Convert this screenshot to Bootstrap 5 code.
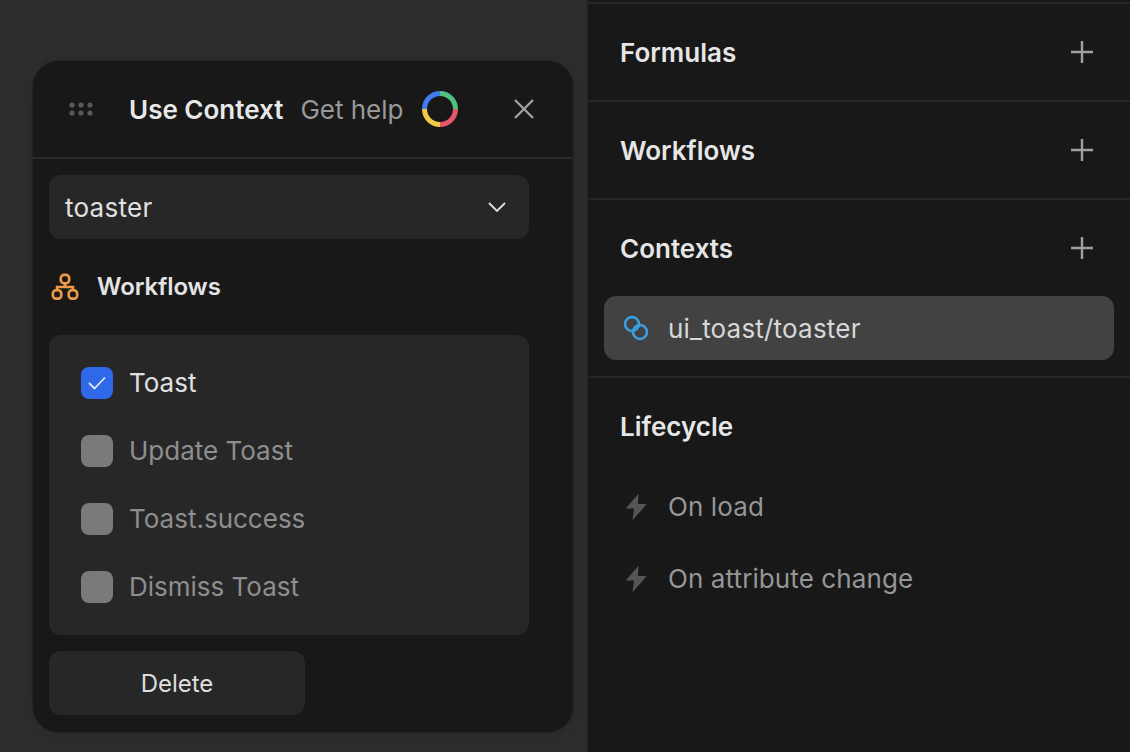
<!DOCTYPE html>
<html lang="en">
<head>
<meta charset="utf-8">
<title>Use Context</title>
<link href="https://cdn.jsdelivr.net/npm/bootstrap@5.3.0/dist/css/bootstrap.min.css" rel="stylesheet">
<style>
html,body{height:100%}
body{background:#2e2e2e;font-family:Inter,"Liberation Sans",sans-serif;color:#e6e6e6;overflow:hidden;font-size:26px;line-height:32px}
.stage{width:1130px;height:752px}
.canvas-area{width:586px;padding:61px 0 0 33px;flex:none}
.float-panel{width:540px;height:671px;background:#181818;border-radius:26px;box-shadow:0 0 0 1px #232323,0 3px 22px rgba(0,0,0,.18)}
.panel-head{height:98px;border-bottom:2px solid #2a2a2a;padding:0 39px 0 36px}
.grip{width:24px;margin-right:36px}
.head-title{font-weight:600;color:#e8e8e8;margin-right:17px;margin-top:2px}
.head-help{color:#999;margin-right:18px;margin-top:2px}
.panel-body{padding:16px}
.select-box{width:480px;height:64px;background:#272727;border-radius:12px;padding:0 16px;color:#e0e0e0}
.select-box span{margin-top:2px;letter-spacing:.01em}
.chev{margin-right:7px}
.flow-head{height:96px;font-weight:600;font-size:24px;color:#e4e4e4;gap:18px;padding-left:2px;letter-spacing:-.1px}
.flow-list{width:480px;height:300px;background:#272727;border-radius:12px;padding:14px 32px}
.flow-row{height:68px;gap:16px;color:#8e8e8e}
.flow-row.is-on{color:#e0e0e0}
.tick{width:32px;height:32px;border-radius:8px;background:#7a7a7a;flex:none}
.is-on .tick{background:#2f68e8}
.del-btn{width:256px;height:64px;background:#272727;border-radius:12px;color:#dedede;margin-top:16px;border:0;font-size:24px;padding:2px 0 0}
.del-btn:hover{background:#272727;color:#dedede}
.side{width:544px;background:#181818;border-left:2px solid #272727;padding-top:2px;flex:none}
.side-sec{border-top:2px solid #262626;height:98px;padding:0 37px 0 32px}
.side-title{font-weight:600;color:#e6e6e6;margin-top:2px}
.ctx-wrap{padding:0 16px 16px 16px;border-bottom:2px solid #262626}
.ctx-item{height:64px;background:#424242;border-radius:12px;padding:0 16px 0 19px;gap:19px;color:#d8d8d8;letter-spacing:.2px}
.ctx-item span{margin-top:2px}
.life{height:98px;padding:0 32px;font-weight:600;color:#e6e6e6}
.life-row{height:72px;padding:0 32px 0 36px;gap:20px;color:#969696;letter-spacing:.1px}
.life-first{margin-top:-5px}
</style>
</head>
<body>
<div class="stage d-flex">
  <div class="canvas-area">
    <div class="float-panel">
      <div class="panel-head d-flex align-items-center">
        <svg class="grip" height="14" viewBox="0 0 24 14"><g fill="#595959"><circle cx="3" cy="3" r="2.6"/><circle cx="12" cy="3" r="2.6"/><circle cx="21" cy="3" r="2.6"/><circle cx="3" cy="11" r="2.6"/><circle cx="12" cy="11" r="2.6"/><circle cx="21" cy="11" r="2.6"/></g></svg>
        <span class="head-title">Use Context</span>
        <span class="head-help">Get help</span>
        <svg width="36" height="36" viewBox="0 0 36 36" fill="none" stroke-width="5"><path d="M2.500 18A15.500 15.500 0 0 1 18 2.500" stroke="#3f7cf0"/><path d="M18 2.500A15.500 15.500 0 0 1 33.500 18" stroke="#4fc27f"/><path d="M33.500 18A15.500 15.500 0 0 1 18 33.500" stroke="#e8566a"/><path d="M18 33.500A15.500 15.500 0 0 1 2.500 18" stroke="#f2cb45"/></svg>
        <svg class="ms-auto" width="20" height="20" viewBox="0 0 20 20" fill="none" stroke="#a0a0a0" stroke-width="2.400"><path d="M1 1l18 18M19 1L1 19"/></svg>
      </div>
      <div class="panel-body">
        <div class="select-box d-flex align-items-center justify-content-between">
          <span>toaster</span>
          <svg class="chev" width="18" height="10" viewBox="0 0 18 10" fill="none" stroke="#e0e0e0" stroke-width="1.800"><path d="M1 1l8 8 8-8"/></svg>
        </div>
        <div class="flow-head d-flex align-items-center">
          <svg width="28" height="28" viewBox="0 0 30 30" fill="none" stroke="#f09a45" stroke-width="2.800"><rect x="10.500" y="2" width="9" height="9" rx="3.500"/><rect x="2" y="18.500" width="9" height="9" rx="3.500"/><rect x="19" y="18.500" width="9" height="9" rx="3.500"/><path d="M15 11v4M6.500 18.500V15h17v3.500"/></svg>
          <span>Workflows</span>
        </div>
        <div class="flow-list">
          <div class="flow-row is-on d-flex align-items-center">
            <span class="tick d-flex align-items-center justify-content-center"><svg width="18" height="14" viewBox="0 0 18 14" fill="none" stroke="#dfe8fb" stroke-width="1.800"><path d="M1 7l5.500 5.500L17 1.500"/></svg></span>
            <span>Toast</span>
          </div>
          <div class="flow-row d-flex align-items-center"><span class="tick"></span><span>Update Toast</span></div>
          <div class="flow-row d-flex align-items-center"><span class="tick"></span><span>Toast.success</span></div>
          <div class="flow-row d-flex align-items-center"><span class="tick"></span><span>Dismiss Toast</span></div>
        </div>
        <button type="button" class="btn del-btn d-block">Delete</button>
      </div>
    </div>
  </div>
  <div class="side">
    <div class="side-sec d-flex align-items-center justify-content-between">
      <span class="side-title">Formulas</span>
      <svg width="22" height="22" viewBox="0 0 22 22" stroke="#a0a0a0" stroke-width="2.400"><path d="M11 0v22M0 11h22"/></svg>
    </div>
    <div class="side-sec d-flex align-items-center justify-content-between">
      <span class="side-title">Workflows</span>
      <svg width="22" height="22" viewBox="0 0 22 22" stroke="#a0a0a0" stroke-width="2.400"><path d="M11 0v22M0 11h22"/></svg>
    </div>
    <div class="side-sec d-flex align-items-center justify-content-between">
      <span class="side-title">Contexts</span>
      <svg width="22" height="22" viewBox="0 0 22 22" stroke="#a0a0a0" stroke-width="2.400"><path d="M11 0v22M0 11h22"/></svg>
    </div>
    <div class="ctx-wrap">
      <div class="ctx-item d-flex align-items-center">
        <svg width="26" height="26" viewBox="0 0 26 26" fill="none" stroke="#3a9fe0" stroke-width="2.600"><circle cx="9" cy="9" r="7"/><circle cx="17" cy="17" r="7"/></svg>
        <span>ui_toast/toaster</span>
      </div>
    </div>
    <div class="life d-flex align-items-center">Lifecycle</div>
    <div class="life-row life-first d-flex align-items-center">
      <svg width="24" height="28" viewBox="0 0 24 28" fill="#565656"><path d="M14.500 .7L1.700 15.500H10L8.500 27.300 22.700 11H14z"/></svg>
      <span>On load</span>
    </div>
    <div class="life-row d-flex align-items-center">
      <svg width="24" height="28" viewBox="0 0 24 28" fill="#565656"><path d="M14.500 .7L1.700 15.500H10L8.500 27.300 22.700 11H14z"/></svg>
      <span>On attribute change</span>
    </div>
  </div>
</div>
<script src="https://cdn.jsdelivr.net/npm/bootstrap@5.3.0/dist/js/bootstrap.bundle.min.js"></script>
</body>
</html>
